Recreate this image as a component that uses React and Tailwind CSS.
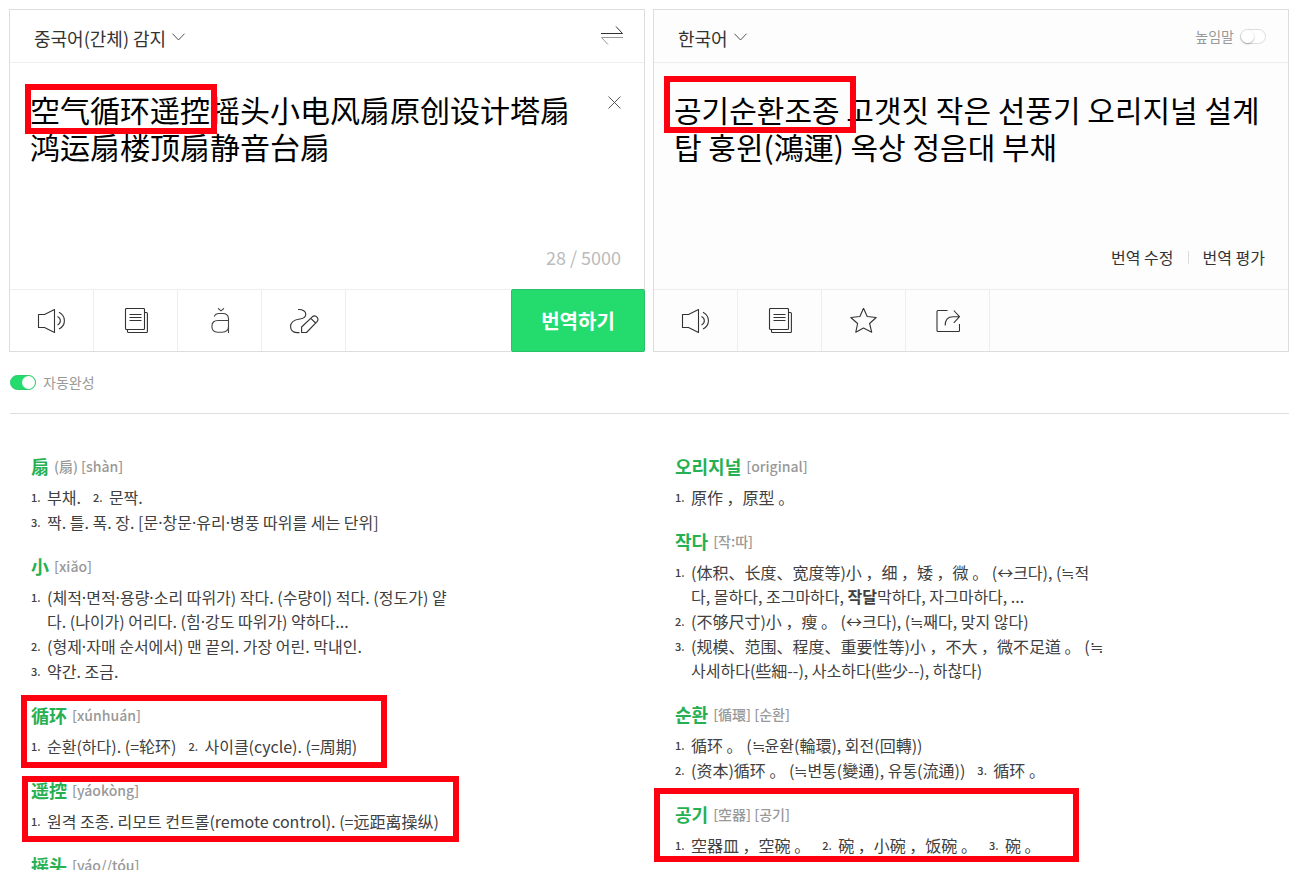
import { Fragment, useState } from "react";

const LEFT_ENTRIES = [
  {
    word: "扇",
    sub: "(扇) [shàn]",
    rows: [
      [["1.", "부채."], ["2.", "문짝."]],
      [["3.", "짝. 틀. 폭. 장. [문·창문·유리·병풍 따위를 세는 단위]"]],
    ],
  },
  {
    word: "小",
    sub: "[xiǎo]",
    rows: [
      [["1.", "(체적·면적·용량·소리 따위가) 작다. (수량이) 적다. (정도가) 얕다. (나이가) 어리다. (힘·강도 따위가) 약하다..."]],
      [["2.", "(형제·자매 순서에서) 맨 끝의. 가장 어린. 막내인."]],
      [["3.", "약간. 조금."]],
    ],
  },
  {
    word: "循环",
    sub: "[xúnhuán]",
    mark: "-left-[10px] -top-2 w-[366px] h-[73px]",
    rows: [[["1.", "순환(하다). (=轮环)"], ["2.", "사이클(cycle). (=周期)"]]],
  },
  {
    word: "遥控",
    sub: "[yáokòng]",
    mark: "-left-[9px] -top-[2px] w-[437px] h-[66px]",
    rows: [[["1.", "원격 조종. 리모트 컨트롤(remote control). (=远距离操纵)"]]],
  },
  { word: "摇头", sub: "[yáo//tóu]", rows: [] },
];

const RIGHT_ENTRIES = [
  { word: "오리지널", sub: "[original]", rows: [[["1.", "原作 ，原型 。"]]] },
  {
    word: "작다",
    sub: "[작:따]",
    rows: [
      [["1.", "(体积、长度、宽度等)小 ，细 ，矮 ，微 。 (↔크다), (≒적다, 몰하다, 조그마하다, *작달*막하다, 자그마하다, ..."]],
      [["2.", "(不够尺寸)小 ，瘦 。 (↔크다), (≒째다, 맞지 않다)"]],
      [["3.", "(规模、范围、程度、重要性等)小 ，不大 ，微不足道 。 (≒사세하다(些細--), 사소하다(些少--), 하찮다)"]],
    ],
  },
  {
    word: "순환",
    sub: "[循環] [순환]",
    rows: [
      [["1.", "循环 。 (≒윤환(輪環), 회전(回轉))"]],
      [["2.", "(资本)循环 。 (≒변통(變通), 유통(流通))"], ["3.", "循环 。"]],
    ],
  },
  {
    word: "공기",
    sub: "[空器] [공기]",
    mark: "-left-[21px] -top-[14px] w-[425px] h-[74px]",
    rows: [[["1.", "空器皿 ，空碗 。"], ["2.", "碗 ，小碗 ，饭碗 。"], ["3.", "碗 。"]]],
  },
];

function Mark({ place }) {
  return <span aria-hidden="true" className={`pointer-events-none absolute border-6 border-[#fe0010] ${place}`} />;
}

function Icon({ w, h = 26, color = "#333", children }) {
  return (
    <svg width={w} height={h} viewBox={`0 0 ${w} ${h}`} fill="none" stroke={color} strokeWidth="1.1" strokeLinejoin="round" aria-hidden="true">
      {children}
    </svg>
  );
}

const SpeakerIcon = () => (
  <Icon w={30}>
    <path d="M1.5 6.5H7.5L17.5 1.5V24.5L7.5 19.5H1.5Z" />
    <path d="M20.5 8.5C24.3 10.5 24.3 15 20.5 17" />
    <path d="M22 4.3C29.2 8 29.2 17.5 22 21" />
  </Icon>
);

const PagesIcon = () => (
  <Icon w={24}>
    <rect x="1.5" y="0.5" width="19" height="21" rx="1" />
    <path d="M21 4.5H22.5Q23.4 4.5 23.4 5.5V23.5Q23.4 24.5 22.5 24.5H4.5Q3.5 24.5 3.5 23.5V22M5.5 6.5H17.5M5.5 9.5H17.5M5.5 12.5H17.5" />
  </Icon>
);

const PinyinIcon = () => (
  <Icon w={20} color="#444">
    <path d="M8 0.3L11 2.8L14 0.3" />
    <path d="M4.2 8.5C5 6.4 6.7 5.5 9 5.5H12.5C16.3 5.5 18.5 7.4 18.5 10.8V25M18.5 12.5H8C4 12.5 1.9 14.8 1.9 18.3C1.9 22 4 24.2 7.6 24.2H12C16 24.2 18.5 22 18.5 18.3" />
  </Icon>
);

const HandwriteIcon = () => (
  <Icon w={30}>
    <path d="M9 1.5C14 1.2 16.8 3.4 16.8 6.3C16.8 9.5 15 10.5 11 11C6 11.6 1.6 13.2 1.6 18.6C1.6 22.6 4.3 24.6 8 24.6H10.5" />
    <path d="M12.6 24.5V19L23.3 8.8C24.8 7.6 26.8 7.8 28 9.2C29.2 10.6 29.1 12.5 27.8 13.8L17.5 24.5ZM21.8 10.3L26.6 15" />
  </Icon>
);

const StarIcon = () => (
  <Icon w={28}>
    <path d="M13.5 0.2L17.2 8.5L26.2 9.5L19.6 15.5L21.7 24.2L13.5 20L5.8 24.2L7.6 15.5L0.8 9.5L9.9 8.5Z" />
  </Icon>
);

const ShareIcon = () => (
  <Icon w={24}>
    <path d="M11.5 2.5H2Q1 2.5 1 3.5V22.5Q1 23.5 2 23.5H22.5Q23.5 23.5 23.5 22.5V16" />
    <path d="M9.2 17.5C9.2 11.5 12 8.7 17 8.7H23.4M17.8 2.5L23.5 8.7L17.8 14.8" />
  </Icon>
);

function LanguageSelect({ label, options }) {
  return (
    <label className="flex items-center gap-[6px]">
      <select aria-label={label} className="appearance-none bg-transparent p-0 pt-[3px] text-lg leading-[26px] text-[#333] outline-none [field-sizing:content]">
        {options.map((o) => (
          <option key={o}>{o}</option>
        ))}
      </select>
      <svg width="14" height="10" viewBox="0 0 14 10" fill="none" stroke="#555" aria-hidden="true">
        <path d="M0.5 2.7L6.5 9L12.5 2.7" />
      </svg>
    </label>
  );
}

function Toggle({ checked, onChange }) {
  return (
    <span className={`relative flex h-[15px] w-[26px] rounded-full border ${checked ? "justify-end border-[#2bcb6c] bg-[#24db6d]" : "justify-start border-[#ddd] bg-white"}`}>
      <input type="checkbox" checked={checked} onChange={onChange} className="absolute inset-0 cursor-pointer opacity-0" />
      <span className={`size-[13px] rounded-full bg-white ${checked ? "" : "shadow-[0_1px_2px_rgba(0,0,0,0.3)]"}`} />
    </span>
  );
}

function ToolButton({ label, children }) {
  return (
    <button type="button" aria-label={label} className="flex w-[84px] items-center justify-center border-r border-[#eee]">
      {children}
    </button>
  );
}

// Middle dots take the narrower Latin glyph; *text* is set in bold.
function Definition({ text }) {
  return text.split(/(·|\*[^*]+\*)/).map((part, i) => {
    if (part === "·") return <span key={i} className="font-['Noto_Sans',sans-serif] leading-none">·</span>;
    if (part.startsWith("*")) return <b key={i}>{part.slice(1, -1)}</b>;
    return <Fragment key={i}>{part}</Fragment>;
  });
}

function Entry({ word, sub, mark, rows }) {
  return (
    <article className="relative">
      <h3 className="flex items-center gap-[5px] leading-6">
        <span className="text-lg leading-6 font-bold text-[#27b052]">{word}</span>
        <span className="text-sm leading-6 font-medium text-[#999]">{sub}</span>
      </h3>
      {rows.length > 0 && (
        <div className="mt-[7px] flex flex-col gap-px">
          {rows.map((row, i) => (
            <div key={i} className="flex gap-3">
              {row.map(([n, text]) => (
                <p key={n} className="flex text-base leading-6 break-all text-[#404040]">
                  <span className="w-4 shrink-0 text-[11px] leading-6 font-medium">{n}</span>
                  <span><Definition text={text} /></span>
                </p>
              ))}
            </div>
          ))}
        </div>
      )}
      {mark && <Mark place={mark} />}
    </article>
  );
}

function EntryList({ entries }) {
  return (
    <section className="pl-[22px]">
      <div className="flex max-w-[432px] flex-col gap-5">
        {entries.map((e) => <Entry key={e.word} {...e} />)}
      </div>
    </section>
  );
}

export default function App() {
  const [source, setSource] = useState("空气循环遥控摇头小电风扇原创设计塔扇鸿运扇楼顶扇静音台扇");
  const [auto, setAuto] = useState(true);
  const [polite, setPolite] = useState(false);

  return (
    <main className="h-screen overflow-hidden bg-white pt-[9px] pr-[11px] pl-[9px] font-['Noto_Sans_CJK_KR','Noto_Sans_CJK_SC',sans-serif] text-[#333]">
      <div className="grid grid-cols-2 gap-2">
        <section className="flex flex-col border border-[#ddd]">
          <header className="flex h-[53px] items-center justify-between border-b border-[#eee] pr-5 pl-6">
            <LanguageSelect label="원본 언어" options={["중국어(간체) 감지", "한국어", "영어"]} />
            <button type="button" aria-label="언어 바꾸기">
              <svg width="24" height="20" viewBox="0 0 24 20" fill="none" aria-hidden="true">
                <path d="M1 7.5H22.5L16 0.5" stroke="#333" />
                <path d="M23 11.5H1.5L8 18.5" stroke="#999" />
              </svg>
            </button>
          </header>
          <div className="relative flex h-[226px] flex-col pt-7 pr-[23px] pb-5 pl-5">
            <div className="flex flex-1 items-start justify-between">
              <textarea
                aria-label="번역할 내용"
                value={source}
                onChange={(e) => setSource(e.target.value)}
                className="h-full w-[550px] resize-none overflow-hidden bg-transparent text-[30px] leading-[37px] text-black outline-none"
              />
              <button type="button" aria-label="지우기" className="mt-1">
                <svg width="14" height="14" viewBox="0 0 14 14" stroke="#555" aria-hidden="true">
                  <path d="M1.5 1.5L13.5 13.5M13.5 1.5L1.5 13.5" />
                </svg>
              </button>
            </div>
            <p className="text-right text-lg leading-6 text-[#bbb]">{source.length} / 5000</p>
            <Mark place="left-[15px] top-[21px] w-[192px] h-[50px]" />
          </div>
          <footer className="flex h-[62px] border-t border-[#eee]">
            <ToolButton label="듣기"><SpeakerIcon /></ToolButton>
            <ToolButton label="복사"><PagesIcon /></ToolButton>
            <ToolButton label="병음"><PinyinIcon /></ToolButton>
            <ToolButton label="필기 입력"><HandwriteIcon /></ToolButton>
            <button type="button" className="relative -m-px ml-auto w-[134px] rounded-xs border border-[#2bbf68] bg-[#24db6d] text-xl font-bold text-white">
              번역하기
            </button>
          </footer>
        </section>

        <section className="flex flex-col border border-[#ddd] bg-[#fdfdfd]">
          <header className="flex h-[53px] items-center justify-between border-b border-[#eee] pr-[22px] pl-6">
            <LanguageSelect label="번역 언어" options={["한국어", "중국어(간체)", "영어"]} />
            <label className="flex items-center gap-[6px] text-sm text-[#999]">
              높임말
              <Toggle checked={polite} onChange={() => setPolite(!polite)} />
            </label>
          </header>
          <div className="relative flex h-[226px] flex-col pt-7 pr-[23px] pb-5 pl-5">
            <p className="-mr-3 flex-1 text-[30px] leading-[37px] text-black">
              공기순환조종 고갯짓 작은 선풍기 오리지널 설계탑 훙윈(鴻運) 옥상 정음대 부채
            </p>
            <div className="flex items-center justify-end text-base leading-6">
              <a href="#edit">번역 수정</a>
              <span className="mx-[14px] h-[13px] w-px bg-[#ddd]" />
              <a href="#rate">번역 평가</a>
            </div>
            <Mark place="left-[10px] top-[13px] w-[192px] h-[57px]" />
          </div>
          <footer className="flex h-[62px] border-t border-[#eee]">
            <ToolButton label="듣기"><SpeakerIcon /></ToolButton>
            <ToolButton label="복사"><PagesIcon /></ToolButton>
            <ToolButton label="즐겨찾기"><StarIcon /></ToolButton>
            <ToolButton label="공유"><ShareIcon /></ToolButton>
          </footer>
        </section>
      </div>

      <div className="ml-px border-b border-[#ddd] pt-5 pb-5">
        <label className="flex w-fit items-center gap-[7px] text-sm leading-[21px] text-[#999]">
          <Toggle checked={auto} onChange={() => setAuto(!auto)} />
          자동완성
        </label>
      </div>

      <div className="grid grid-cols-2 gap-2 pt-10">
        <EntryList entries={LEFT_ENTRIES} />
        <EntryList entries={RIGHT_ENTRIES} />
      </div>
    </main>
  );
}
